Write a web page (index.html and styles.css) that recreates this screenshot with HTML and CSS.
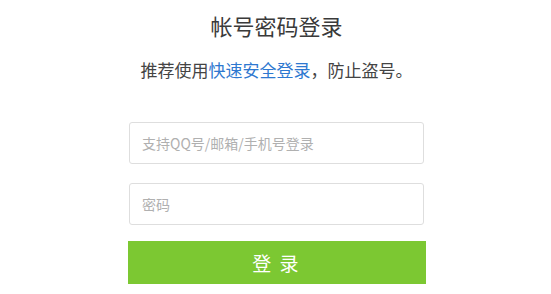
FILE: index.html
```html
<!DOCTYPE html>
<html lang="zh">
<head>
<meta charset="utf-8">
<link rel="stylesheet" href="styles.css">
</head>
<body>
<div class="page">
  <div class="login">
    <h1 class="title">帐号密码登录</h1>
    <p class="tip">推荐使用<a class="link">快速安全登录</a>，防止盗号。</p>
    <div class="field"><span class="ph">支持QQ号/邮箱/手机号登录</span></div>
    <div class="field"><span class="ph">密码</span></div>
    <div class="btn">登 录</div>
  </div>
</div>
</body>
</html>
```
FILE: styles.css
```css
html, body { margin: 0; padding: 0; background: #fff; }
body { font-family: "Noto Sans CJK SC", "Liberation Sans", sans-serif; width: 551px; height: 294px; overflow: hidden; }
.page { display: flex; justify-content: center; }
.login { width: 298px; margin-left: 2px; display: flex; flex-direction: column; align-items: center; }
.title { margin: 10px 0 0; font-size: 22px; font-weight: normal; color: #3a3a3a; line-height: 30px; }
.tip { margin: 18px 0 0; font-size: 17px; color: #444; line-height: 24px; white-space: nowrap; }
.link { color: #2e78d0; }
.field { box-sizing: border-box; width: 295px; height: 42px; border: 1px solid #dedede; border-radius: 3px; display: flex; align-items: center; padding-left: 12px; }
.field:first-of-type { margin-top: 40px; }
.field + .field { margin-top: 19px; }
.ph { font-size: 14px; color: #b0b0b0; }
.btn { margin-top: 16px; width: 298px; height: 43px; background: #7cc832; color: #fff; font-size: 19px; letter-spacing: 2px; display: flex; align-items: center; justify-content: center; }
```
